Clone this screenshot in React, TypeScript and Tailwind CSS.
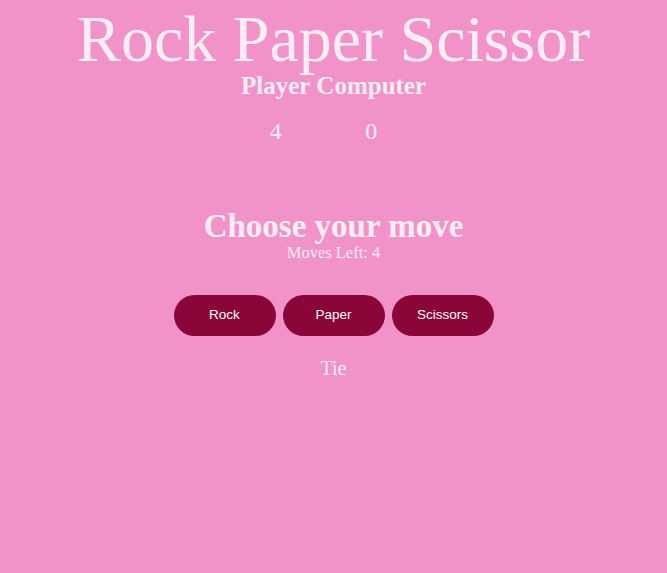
import { useState } from 'react'

const moves = ['Rock', 'Paper', 'Scissors']

export default function App() {
  const [playerScore] = useState(4)
  const [computerScore] = useState(0)
  const [movesLeft] = useState(4)
  const [result] = useState('Tie')

  return (
    <div className="min-h-screen bg-[#f192c8] text-[#fcedf5] text-center font-['Liberation_Serif','Times_New_Roman',serif]">
      <h1 className="pt-[6px] text-[66px] leading-[66px]">Rock Paper Scissor</h1>

      {/* scoreboard */}
      <div className="flex justify-center gap-[6px]">
        <div className="flex flex-col items-center">
          <h2 className="text-[25px] leading-[28px] font-bold">Player</h2>
          <p className="mt-[18px] text-[24px] leading-[27px]">{playerScore}</p>
        </div>
        <div className="flex flex-col items-center">
          <h2 className="text-[25px] leading-[28px] font-bold">Computer</h2>
          <p className="mt-[18px] text-[24px] leading-[27px]">{computerScore}</p>
        </div>
      </div>

      <h1 className="mt-[65px] text-[33px] leading-[33px] font-bold">Choose your move</h1>
      <p className="mt-[2px] text-[16.5px] leading-[16px]">Moves Left: {movesLeft}</p>

      <div className="mt-[34px] flex justify-center gap-[7px]">
        {moves.map((m) => (
          <button
            key={m}
            className="w-[102px] h-[41px] rounded-[21px] bg-[#8b0638] text-white text-[13.5px] font-['Liberation_Sans',Arial,sans-serif]"
          >
            {m}
          </button>
        ))}
      </div>

      <p className="mt-[22px] text-[20px] leading-[20px]">{result}</p>
    </div>
  )
}
